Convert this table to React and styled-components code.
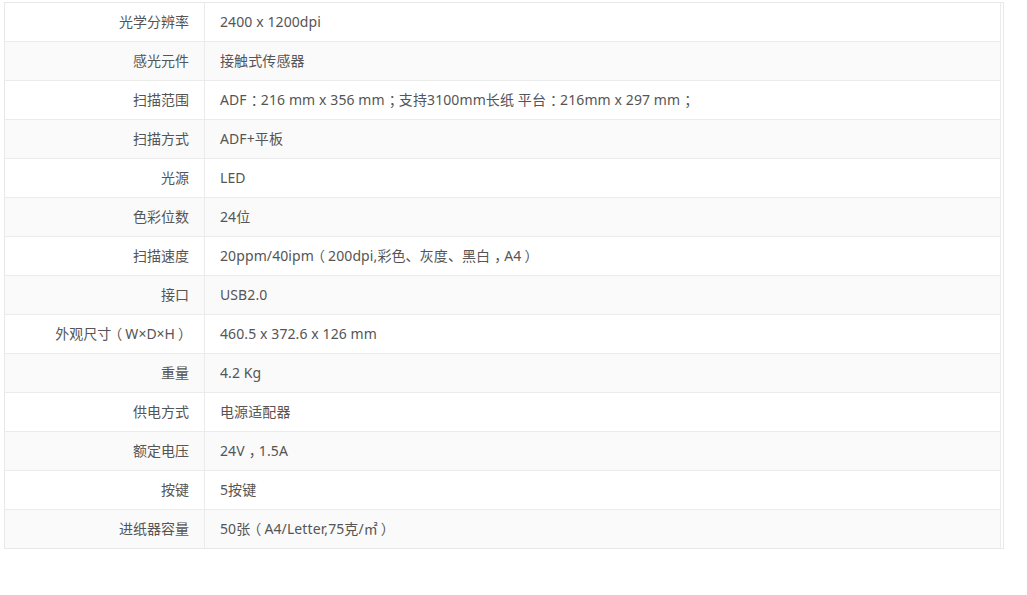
import React from "react";
import styled, { createGlobalStyle, css } from "styled-components";

const Global = createGlobalStyle`
  html, body { margin: 0; padding: 0; background: #fff; }
  body { font-family: "Noto Sans", "Noto Sans CJK SC", sans-serif; }
`;

const Page = styled.div`
  padding: 2px 0 0 4px;
`;

const Frame = styled.div`
  width: 998px;
  border: 1px solid #e8e8e8;
`;

const Table = styled.table`
  width: 996px;
  border-collapse: collapse;
  table-layout: fixed;
`;

const Row = styled.tr`
  background: ${(p) => (p.$striped ? "#fafafa" : "#fff")};
  border-bottom: ${(p) => (p.$last ? "none" : "1px solid #ebebeb")};
  border-right: 1px solid #ebebeb;
`;

const Label = styled.td`
  width: 184px;
  height: 36px;
  padding: 0 15px 2px 0;
  text-align: right;
  border-right: 1px solid #ebebeb;
  font-size: 14px;
  color: #555;
  white-space: nowrap;
`;

const Value = styled.td`
  height: 36px;
  padding: 0 0 2px 15px;
  text-align: left;
  font-size: 14px;
  color: #555;
  white-space: nowrap;
  letter-spacing: 0.1px;
`;

/* Full-width punctuation centred in its em box, as in the reference font:
   half-width alternate glyph plus padding on both sides. */
const Punct = styled.span`
  font-feature-settings: "halt" 1;
  ${(p) =>
    p.$kind === "open"
      ? css`
          padding: 0 3px 0 4px;
        `
      : p.$kind === "close"
      ? css`
          padding: 0 4px 0 3px;
        `
      : css`
          padding: 0 3px 0 4px;
        `}
`;

const PUNCT = /([，：；（）])/;
const kindOf = (c) => (c === "（" ? "open" : c === "）" ? "close" : "mid");

function Text({ children }) {
  return children.split(PUNCT).map((part, i) =>
    PUNCT.test(part) ? (
      <Punct key={i} $kind={kindOf(part)}>
        {part}
      </Punct>
    ) : (
      part
    )
  );
}

const rows = [
  ["光学分辨率", "2400 x 1200dpi"],
  ["感光元件", "接触式传感器"],
  ["扫描范围", "ADF：216 mm x 356 mm；支持3100mm长纸 平台：216mm x 297 mm；"],
  ["扫描方式", "ADF+平板"],
  ["光源", "LED"],
  ["色彩位数", "24位"],
  ["扫描速度", "20ppm/40ipm（200dpi,彩色、灰度、黑白，A4）"],
  ["接口", "USB2.0"],
  ["外观尺寸（W×D×H）", "460.5 x 372.6 x 126 mm"],
  ["重量", "4.2 Kg"],
  ["供电方式", "电源适配器"],
  ["额定电压", "24V，1.5A"],
  ["按键", "5按键"],
  ["进纸器容量", "50张（A4/Letter,75克/㎡）"],
];

export default function App() {
  return (
    <>
      <Global />
      <Page>
        <Frame>
          <Table>
            <tbody>
              {rows.map(([k, v], i) => (
                <Row key={k} $striped={i % 2 === 1} $last={i === rows.length - 1}>
                  <Label>
                    <Text>{k}</Text>
                  </Label>
                  <Value>
                    <Text>{v}</Text>
                  </Value>
                </Row>
              ))}
            </tbody>
          </Table>
        </Frame>
      </Page>
    </>
  );
}
